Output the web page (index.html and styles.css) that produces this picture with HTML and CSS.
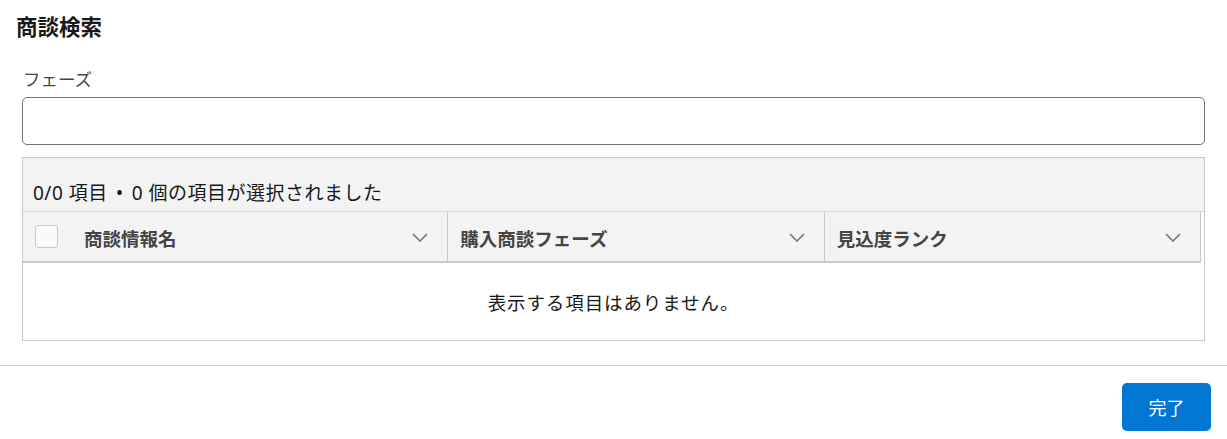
FILE: index.html
```html
<!DOCTYPE html>
<html lang="ja">
<head>
<meta charset="utf-8">
<link rel="stylesheet" href="styles.css">
</head>
<body>
<div class="modal">
  <h1 class="title">商談検索</h1>
  <div class="body">
    <label class="label">フェーズ</label>
    <div class="input"></div>
    <div class="table">
      <div class="topbar">0/0 項目<span class="dot">•</span>0 個の項目が選択されました</div>
      <div class="thead">
        <div class="cb-cell"><span class="checkbox"></span></div>
        <div class="th th-first"><span class="th-text">商談情報名</span>
          <svg class="chev" viewBox="0 0 16 9"><path d="M1 1l7 7 7-7" fill="none" stroke="#747474" stroke-width="1.6"/></svg></div>
        <div class="th"><span class="th-text">購入商談フェーズ</span>
          <svg class="chev" viewBox="0 0 16 9"><path d="M1 1l7 7 7-7" fill="none" stroke="#747474" stroke-width="1.6"/></svg></div>
        <div class="th"><span class="th-text">見込度ランク</span>
          <svg class="chev" viewBox="0 0 16 9"><path d="M1 1l7 7 7-7" fill="none" stroke="#747474" stroke-width="1.6"/></svg></div>
      </div>
      <div class="empty">表示する項目はありません。</div>
    </div>
  </div>
  <div class="footer">
    <button class="btn">完了</button>
  </div>
</div>
</body>
</html>
```
FILE: styles.css
```css
html, body {
  margin: 0;
  padding: 0;
  background: #fff;
}
body {
  font-family: "Noto Sans", "Noto Sans CJK JP", sans-serif;
  color: #181818;
}
.title {
  margin: 0;
  padding: 12px 16px 0;
  font-size: 21.5px;
  line-height: 30px;
  font-weight: 700;
  color: #181818;
}
.body {
  padding: 25px 22px 0;
}
.label {
  display: block;
  padding-left: 1px;
  font-size: 17.5px;
  line-height: 24px;
  color: #444;
}
.input {
  margin-top: 6px;
  height: 48px;
  box-sizing: border-box;
  border: 1px solid #747474;
  border-radius: 5px;
  background: #fff;
}
.table {
  margin-top: 12px;
  border: 1px solid #c9c9c9;
  background: #fff;
}
.topbar {
  background: #f3f3f3;
  height: 54px;
  box-sizing: border-box;
  padding: 22px 10px 0;
  font-size: 19px;
  line-height: 26px;
  letter-spacing: 0.5px;
  color: #181818;
  border-bottom: 1px solid #d8d8d8;
}
.dot {
  display: inline-block;
  margin: 0 8px;
  font-size: 20px;
}
.thead {
  display: flex;
  width: 1178px;
  height: 51px;
  box-sizing: border-box;
  background: #f3f3f3;
  border-bottom: 2px solid #c9c9c9;
  border-right: 1px solid #c9c9c9;
}
.cb-cell {
  width: 48px;
  flex: none;
  display: flex;
  align-items: center;
  padding-left: 12px;
  box-sizing: border-box;
}
.checkbox {
  width: 23px;
  height: 23px;
  box-sizing: border-box;
  border: 1px solid #c9c9c9;
  border-radius: 3px;
  background: #fafafa;
}
.th {
  flex: 1;
  display: flex;
  align-items: center;
  justify-content: space-between;
  padding: 2px 19px 0 12px;
  box-sizing: border-box;
  border-left: 1px solid #c9c9c9;
}
.th-first {
  border-left: none;
  padding-left: 13px;
}
.th-text {
  font-size: 18.5px;
  font-weight: 700;
  color: #444;
}
.chev {
  width: 16px;
  height: 9px;
  flex: none;
}
.empty {
  height: 77px;
  display: flex;
  align-items: center;
  justify-content: center;
  font-size: 18.5px;
  letter-spacing: 0.9px;
  color: #181818;
}
.footer {
  margin-top: 24px;
  border-top: 1px solid #c9c9c9;
  display: flex;
  justify-content: flex-end;
  padding: 17px 16px 0;
}
.btn {
  width: 89px;
  height: 48px;
  border: none;
  border-radius: 5px;
  background: #0176d3;
  color: #fff;
  font-family: "Noto Sans", "Noto Sans CJK JP", sans-serif;
  font-size: 18px;
  padding: 0;
}
```
